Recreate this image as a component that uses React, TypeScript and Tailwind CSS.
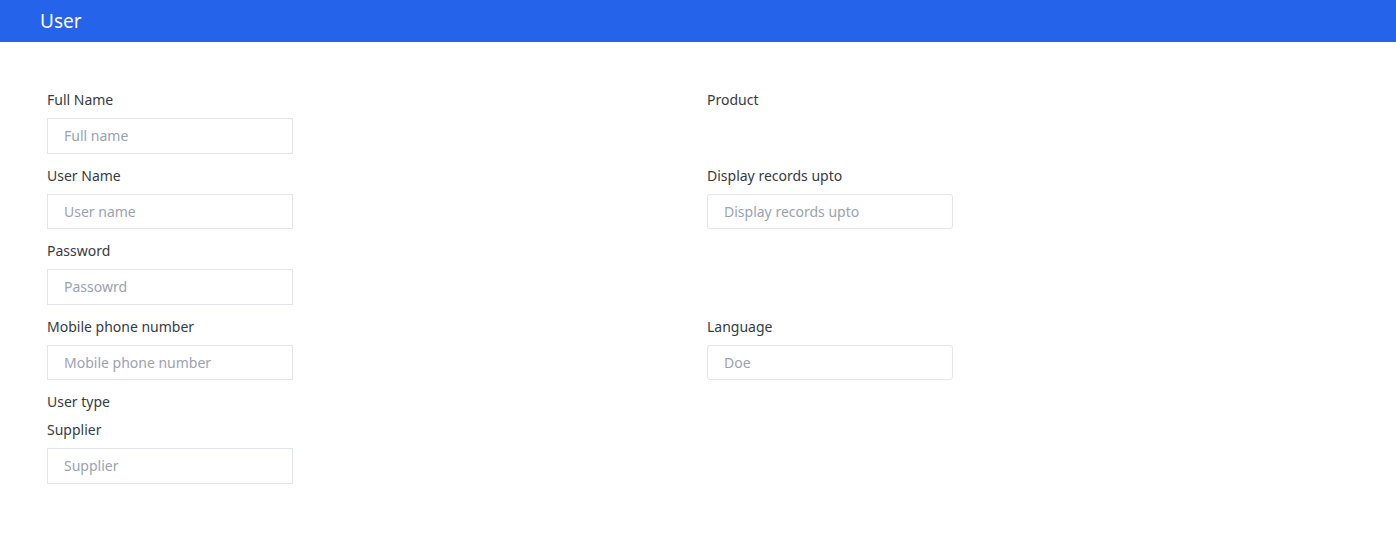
import React from 'react';

interface FieldProps {
  label: string;
  placeholder?: string;
  rounded?: boolean;
}

function Field({ label, placeholder, rounded }: FieldProps) {
  return (
    <div className="flex flex-col">
      <label className="text-[14px] leading-5 text-[#363b42]">{label}</label>
      {placeholder !== undefined && (
        <input
          type="text"
          placeholder={placeholder}
          className={
            'mt-2 h-[35.5px] w-[246px] border border-[#e2e5ea] bg-white px-4 text-[14px] text-[#363b42] placeholder-[#9aa3af] focus:outline-none ' +
            (rounded ? 'rounded-[3px]' : 'rounded-none')
          }
        />
      )}
    </div>
  );
}

export default function App() {
  return (
    <div className="min-h-screen bg-white font-['Noto_Sans','Open_Sans',sans-serif]">
      {/* Header */}
      <div className="flex h-[42px] items-center bg-[#2563eb] px-10">
        <h1 className="text-[19px] text-white">User</h1>
      </div>

      {/* Form */}
      <div className="grid grid-cols-[660px_1fr] gap-y-3 px-[47px] pt-12">
        <Field label="Full Name" placeholder="Full name" />
        <Field label="Product" />

        <Field label="User Name" placeholder="User name" />
        <Field label="Display records upto" placeholder="Display records upto" rounded />

        <Field label="Password" placeholder="Passowrd" />
        <div />

        <Field label="Mobile phone number" placeholder="Mobile phone number" />
        <Field label="Language" placeholder="Doe" rounded />

        <div className="flex flex-col">
          <span className="text-[14px] leading-5 text-[#363b42]">User type</span>
          <div className="mt-2">
            <Field label="Supplier" placeholder="Supplier" />
          </div>
        </div>
        <div />
      </div>
    </div>
  );
}
